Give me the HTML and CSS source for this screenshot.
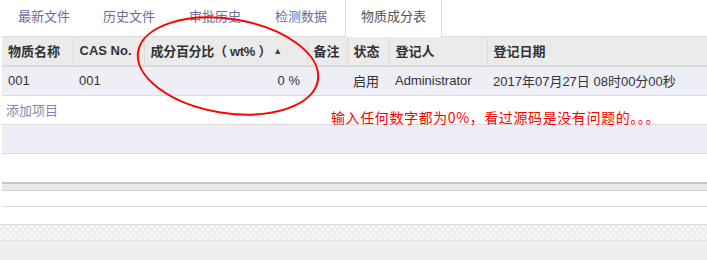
FILE: index.html
```html
<!DOCTYPE html>
<html lang="zh-CN">

<head>
    <meta charset="UTF-8">
    <title>物质成分表</title>
    <link rel="stylesheet" href="styles.css">
</head>

<body>
    <div class="page">
        <ul class="tabs">
            <li>最新文件</li>
            <li>历史文件</li>
            <li>审批历史</li>
            <li>检测数据</li>
            <li class="active">物质成分表</li>
        </ul>

        <table class="grid">
            <thead>
                <tr>
                    <th class="c-name">物质名称</th>
                    <th class="c-cas">CAS No.</th>
                    <th class="c-pct">成分百分比（ wt% ）<span class="sort">&#9650;</span></th>
                    <th class="c-note">备注</th>
                    <th class="c-state">状态</th>
                    <th class="c-user">登记人</th>
                    <th>登记日期</th>
                </tr>
            </thead>
            <tbody>
                <tr class="row">
                    <td>001</td>
                    <td>001</td>
                    <td class="num">0 %</td>
                    <td></td>
                    <td>启用</td>
                    <td>Administrator</td>
                    <td>2017年07月27日 08时00分00秒</td>
                </tr>
            </tbody>
        </table>

        <div class="add-row"><a href="#">添加项目</a></div>
        <div class="empty-row"></div>
        <div class="gap"></div>
        <div class="bar"></div>
        <div class="line-row"></div>
        <div class="line-row last"></div>
        <div class="checker"></div>
        <div class="floor"></div>

        <svg class="circle" width="220" height="120" viewBox="0 0 220 120">
            <ellipse cx="110" cy="59" rx="91" ry="47" transform="rotate(9 110 59)" fill="none" stroke="#ff0000" stroke-width="2" />
        </svg>
        <div class="note">输入任何数字都为0%，看过源码是没有问题的。。。</div>
    </div>
</body>

</html>
```

FILE: styles.css
```css
* {
    box-sizing: border-box;
}

body {
    margin: 0;
    font-family: "Liberation Sans", "Noto Sans CJK SC", sans-serif;
    font-size: 13px;
    color: #333;
    background: #fff;
}

.page {
    position: relative;
    width: 707px;
    height: 260px;
    overflow: hidden;
}

.tabs {
    display: flex;
    margin: 0;
    padding: 0;
    list-style: none;
    height: 36px;
}

.tabs li {
    width: 86px;
    height: 36px;
    line-height: 34px;
    text-align: center;
    color: #6b6ba0;
    cursor: pointer;
}

.tabs li:first-child {
    padding-left: 2px;
}

.tabs li.active {
    width: 97px;
    margin-left: 1px;
    height: 37px;
    background: #fff;
    color: #555;
    border-left: 1px solid #ddd;
    border-right: 1px solid #ddd;
    position: relative;
    z-index: 1;
}

.grid {
    margin-left: 2px;
    width: 705px;
    border-collapse: collapse;
    table-layout: fixed;
}

.grid th,
.grid td {
    padding: 0 6px;
    text-align: left;
    white-space: nowrap;
}

.grid th {
    height: 29px;
    background: #ebebeb;
    font-weight: bold;
    border-top: 1px solid #dcdcdc;
    border-bottom: 2px solid #dcdcdc;
    border-right: 1px solid #dcdcdc;
}

.grid th:last-child {
    border-right: 0;
}

.c-name {
    width: 71px;
}

.c-cas {
    width: 71px;
}

.c-pct {
    width: 163px;
    letter-spacing: -0.3px;
}

.c-note {
    width: 40px;
}

.c-state {
    width: 42px;
}

.c-user {
    width: 98px;
}

.sort {
    font-size: 9px;
    margin-left: 2px;
    vertical-align: 2px;
    color: #444;
}

.row td {
    height: 30px;
    background: #eeeef6;
    border-bottom: 1px solid #dcdcdc;
}

.row td.num {
    text-align: right;
    padding-right: 7px;
}

.add-row {
    margin-left: 2px;
    height: 29px;
    padding: 4px 4px;
    border-bottom: 1px solid #dcdcdc;
}

.add-row a {
    color: #8585b5;
    text-decoration: none;
}

.empty-row {
    margin-left: 2px;
    height: 29px;
    background: #eeeef6;
    border-bottom: 1px solid #dcdcdc;
}

.gap {
    height: 28px;
}

.bar {
    margin-left: 2px;
    height: 9px;
    background: #e9e9e9;
    border-top: 2px solid #c8c8c8;
    border-bottom: 1px solid #d4d4d4;
}

.line-row {
    margin-left: 2px;
    height: 16px;
    border-bottom: 1px solid #dcdcdc;
}

.line-row.last {
    height: 17px;
    border-bottom: 0;
}

.checker {
    height: 17px;
    background-color: #f4f4f4;
    background-image: repeating-conic-gradient(#ececec 0 25%, #f7f7f7 0 50%);
    background-size: 6px 6px;
    border-top: 1px solid #dedede;
    border-bottom: 1px solid #e3e3e3;
}

.floor {
    height: 30px;
    background: #efeded;
}

.circle {
    position: absolute;
    left: 118px;
    top: 7px;
}

.note {
    position: absolute;
    left: 331px;
    top: 108px;
    font-family: "Noto Sans CJK SC", sans-serif;
    font-size: 14px;
    line-height: 18px;
    color: #ff0000;
    letter-spacing: 0.6px;
}
```
